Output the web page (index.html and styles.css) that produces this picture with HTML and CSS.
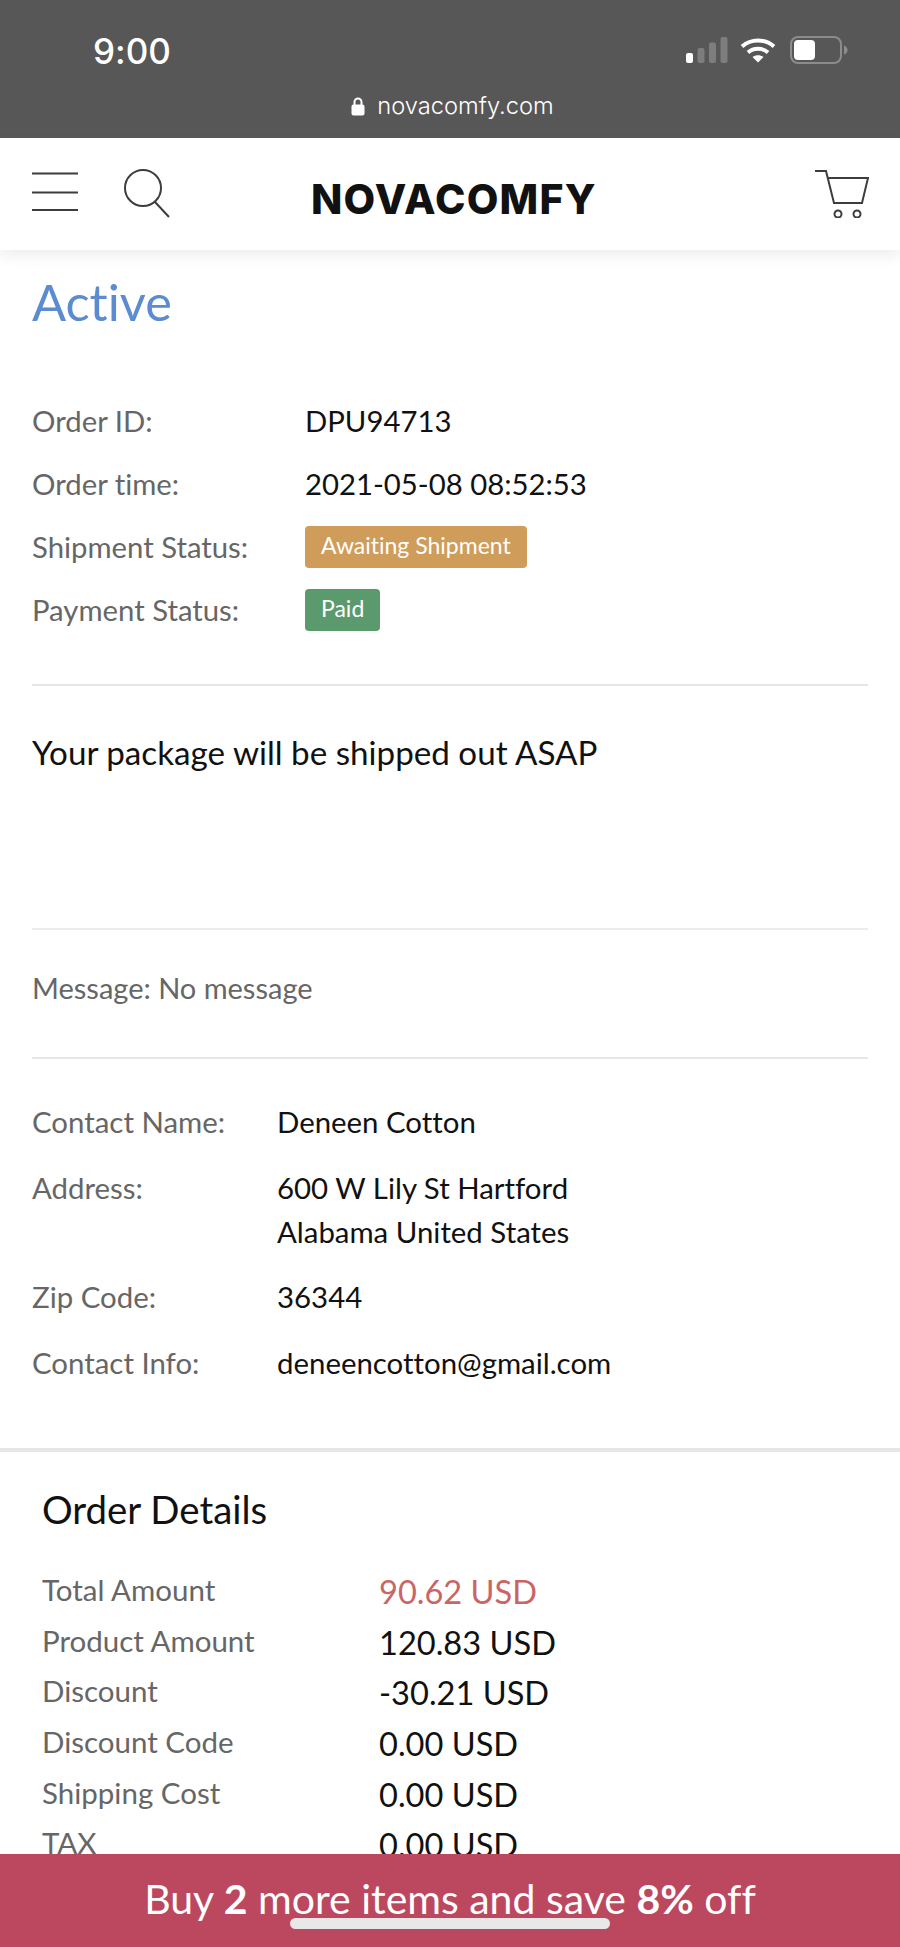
FILE: index.html
```
<!DOCTYPE html>
<html lang="en">
<head>
<meta charset="utf-8">
<title>Novacomfy order</title>
<link rel="stylesheet" href="styles.css">
</head>
<body>
<div class="screen">
  <div class="status">
    <div class="status-top">
      <span class="clock">9:00</span>
      <div class="indicators">
        <svg class="signal" width="42" height="26" viewBox="0 0 42 26"><rect x="0" y="16" width="7" height="10" rx="2" fill="#fff"/><rect x="11.500" y="11" width="7" height="15" rx="2" fill="#7d7d7d"/><rect x="23" y="5.500" width="7" height="20.500" rx="2" fill="#7d7d7d"/><rect x="34.500" y="0" width="7" height="26" rx="2" fill="#7d7d7d"/></svg>
        <svg class="wifi" width="36" height="26" viewBox="0 0 36 26"><path d="M2 9.500C11 1.500 25 1.500 34 9.500" fill="none" stroke="#fff" stroke-width="4"/><path d="M8 15.500C13.500 10.500 22.500 10.500 28 15.500" fill="none" stroke="#fff" stroke-width="4"/><path d="M12.500 20L18 25.500L23.500 20C20 17.500 16 17.500 12.500 20Z" fill="#fff"/></svg>
        <svg class="battery" width="58" height="28" viewBox="0 0 58 28"><rect x="1" y="1" width="50" height="26" rx="7" fill="none" stroke="#8c8c8c" stroke-width="2"/><rect x="4" y="4" width="21" height="20" rx="4" fill="#fff"/><path d="M54 9.500C56.500 10.500 57.500 12 57.500 14C57.500 16 56.500 17.500 54 18.500Z" fill="#8c8c8c"/></svg>
      </div>
    </div>
    <div class="url">
      <svg width="14" height="19" viewBox="0 0 14 19"><path d="M3.500 8V5a3.500 3.500 0 0 1 7 0v3" fill="none" stroke="#fff" stroke-width="2"/><rect x="0.500" y="7.500" width="13" height="11" rx="2" fill="#fff"/></svg>
      <span>novacomfy.com</span>
    </div>
  </div>

  <header class="site-header">
    <div class="header-left">
      <svg width="46" height="40" viewBox="0 0 46 40"><path d="M0 1.500H46M0 20.500H46M0 38H46" stroke="#3d3d3d" stroke-width="2"/></svg>
      <svg width="48" height="50" viewBox="0 0 48 50"><circle cx="19" cy="19" r="18" fill="none" stroke="#3d3d3d" stroke-width="2"/><path d="M31 33L45 48" stroke="#3d3d3d" stroke-width="2"/></svg>
    </div>
    <div class="logo">NOVACOMFY</div>
    <svg class="cart" width="54" height="48" viewBox="0 0 54 48"><path d="M0 1H11L19 33H47L53 8H13" fill="none" stroke="#3d3d3d" stroke-width="2"/><circle cx="23" cy="44" r="3.500" fill="none" stroke="#3d3d3d" stroke-width="2"/><circle cx="42" cy="44" r="3.500" fill="none" stroke="#3d3d3d" stroke-width="2"/></svg>
  </header>

  <main class="content">
    <section class="order">
      <h1 class="state">Active</h1>
      <dl class="info">
        <dt>Order ID:</dt><dd>DPU94713</dd>
        <dt>Order time:</dt><dd>2021-05-08 08:52:53</dd>
        <dt>Shipment Status:</dt><dd><span class="badge badge-wait">Awaiting Shipment</span></dd>
        <dt>Payment Status:</dt><dd><span class="badge badge-paid">Paid</span></dd>
      </dl>
      <p class="note">Your package will be shipped out ASAP</p>
      <p class="message">Message: No message</p>
      <dl class="contact">
        <dt>Contact Name:</dt><dd>Deneen Cotton</dd>
        <dt>Address:</dt><dd>600 W Lily St Hartford<br>Alabama United States</dd>
        <dt>Zip Code:</dt><dd>36344</dd>
        <dt>Contact Info:</dt><dd>deneencotton@gmail.com</dd>
      </dl>
    </section>
    <section class="details">
      <h2>Order Details</h2>
      <dl class="amounts">
        <dt>Total Amount</dt><dd class="total">90.62 USD</dd>
        <dt>Product Amount</dt><dd>120.83 USD</dd>
        <dt>Discount</dt><dd>-30.21 USD</dd>
        <dt>Discount Code</dt><dd>0.00 USD</dd>
        <dt>Shipping Cost</dt><dd>0.00 USD</dd>
        <dt>TAX</dt><dd>0.00 USD</dd>
      </dl>
    </section>
  </main>

  <footer class="promo">Buy <b>2</b> more items and save <b>8%</b> off</footer>
  <div class="home-bar"></div>
</div>
</body>
</html>
```
FILE: styles.css
```
* { box-sizing: border-box; }
html, body { margin: 0; height: 1947px; overflow: hidden; background: #fff; }
body { font-family: "Lato", "Liberation Sans", sans-serif; color: #111; font-variant-ligatures: none; }
dl, dd, dt, p, h1, h2 { margin: 0; font-weight: 400; }

.screen { position: relative; height: 1947px; display: flex; flex-direction: column; overflow: hidden; }

.status { height: 138px; flex: none; background: #575757; color: #fff; font-family: "Inter", "Liberation Sans", sans-serif; }
.status-top { height: 94px; padding: 31px 52px 0 93px; display: flex; justify-content: space-between; align-items: flex-start; }
.clock { font-size: 35px; line-height: 40px; font-weight: 500; }
.indicators { display: flex; align-items: center; gap: 12px; height: 38px; }
.battery { margin-left: 2px; }
.url { display: flex; justify-content: center; align-items: center; gap: 12px; height: 24px; font-size: 23.700px; line-height: 24px; font-weight: 300; padding-left: 5px; }

.site-header { position: relative; z-index: 1; height: 112px; flex: none; padding: 32px 32px 0; background: #fff; box-shadow: 0 6px 14px rgba(0,0,0,.07); display: flex; justify-content: space-between; align-items: flex-start; }
.header-left { display: flex; gap: 46px; align-items: flex-start; padding-top: 2px; }
.header-left svg:last-child { margin-top: -3px; }
.logo { position: absolute; left: 311px; top: 37px; font-family: "Inter", sans-serif; font-weight: 800; font-size: 41px; line-height: 48px; letter-spacing: 1.200px; color: #111; }
.cart { margin-right: -1px; }

.content { flex: 1; min-height: 0; overflow: hidden; }
.order { padding: 20px 32px 0; }
.state { font-size: 50.500px; line-height: 64px; color: #5b8bd0; }

.info { margin-top: 55px; padding-bottom: 43px; display: grid; grid-template-columns: 273px 1fr; grid-auto-rows: 63px; align-items: center; font-size: 29.300px; border-bottom: 2px solid #e6e6e6; }
dt { color: #666; }
.badge { display: inline-block; height: 42px; padding: 0 16px; border-radius: 4px; font-size: 23px; line-height: 39px; color: #fff; vertical-align: top; }
.badge-wait { background: #cf9d59; }
.badge-paid { background: #5a9a6c; }
.info dd, .contact dd { color: #111; }

.note { height: 244px; padding-top: 46px; font-size: 33.200px; line-height: 40px; border-bottom: 2px solid #ececec; }
.message { height: 129px; padding-top: 38px; font-size: 29px; line-height: 40px; color: #666; border-bottom: 2px solid #e6e6e6; }

.contact { padding-top: 41px; display: grid; grid-template-columns: 245px 1fr; row-gap: 21.500px; font-size: 29.400px; line-height: 44px; }

.details { margin-top: 63px; padding: 35px 42px 0; border-top: 4px solid #e6e6e6; }
.details h2 { font-size: 38.400px; line-height: 44px; color: #111; }
.amounts { margin-top: 36px; display: grid; grid-template-columns: 337px 1fr; grid-auto-rows: 50.600px; align-items: center; font-size: 29.500px; }
.amounts dt { padding-bottom: 4px; }
.amounts dd { font-size: 32.600px; color: #111; }
.amounts .total { color: #c96565; }

.promo { flex: none; height: 93px; padding-top: 21px; background: #bc4860; color: #fff; text-align: center; font-size: 41px; line-height: 48px; }
.promo b { font-weight: 700; }
.home-bar { position: absolute; left: 290px; top: 1918px; width: 320px; height: 11px; border-radius: 6px; background: #e8e8e8; }
```
